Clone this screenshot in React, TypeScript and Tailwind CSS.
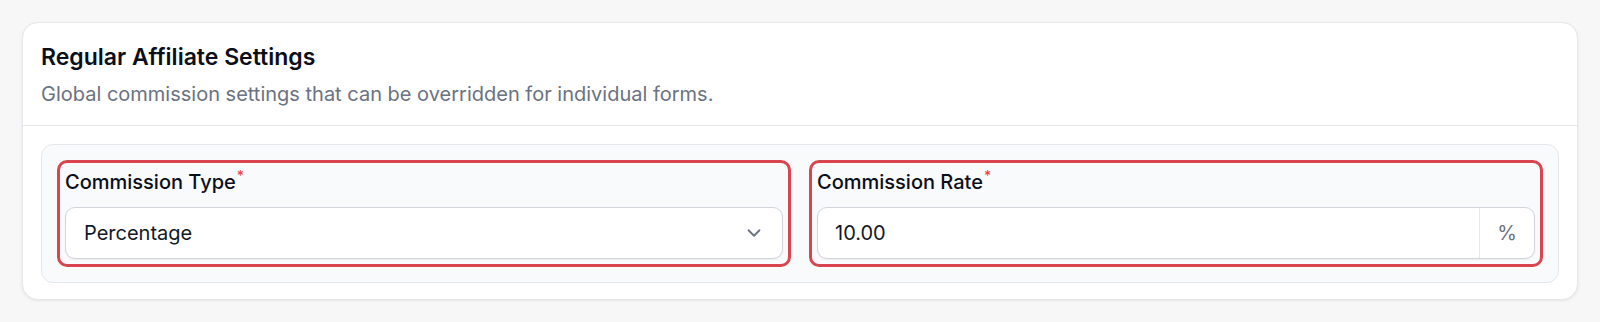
import React, { useState } from 'react';
import { ChevronDown } from 'lucide-react';

const Required = () => (
  <span className="relative -top-[8px] ml-[1px] text-[14px] leading-none text-[#ef4444]">*</span>
);

const App = () => {
  const [rate, setRate] = useState('10.00');

  return (
    <div className="min-h-[322px] bg-[#f7f7f7] p-[22px] font-['Inter','Liberation_Sans',sans-serif] text-[#111827]">
      <div className="rounded-[16px] border border-[#e5e7eb] bg-white shadow-[0_1px_3px_rgba(0,0,0,0.08)]">
        {/* Header */}
        <div className="border-b border-[#e5e7eb] px-[18px] pb-[17px] pt-[20px]">
          <h2 className="text-[23px] font-semibold leading-7 text-[#0b0f19]">Regular Affiliate Settings</h2>
          <p className="mt-[9px] text-[20px] leading-7 text-[#6b7280]">
            Global commission settings that can be overridden for individual forms.
          </p>
        </div>

        {/* Body */}
        <div className="px-[18px] pb-[16px] pt-[18px]">
          <div className="grid grid-cols-2 gap-[18px] rounded-[12px] border border-[#e5e7eb] bg-[#f9fafb] p-[15px]">
            <div className="rounded-[10px] border-[3px] border-[#da4450] p-[5px]">
              <label className="block text-[20px] font-medium leading-7 text-[#0b0f19]">
                Commission Type
                <Required />
              </label>
              <button
                type="button"
                className="mt-[11px] flex h-[52px] w-full items-center justify-between rounded-[10px] border border-[#d1d5db] bg-white pl-[18px] pr-[17px] text-[20px] text-[#111827] shadow-[0_1px_2px_rgba(0,0,0,0.06)]"
              >
                <span>Percentage</span>
                <ChevronDown size={22} strokeWidth={2} className="text-[#6b7280]" />
              </button>
            </div>

            <div className="rounded-[10px] border-[3px] border-[#da4450] p-[5px]">
              <label className="block text-[20px] font-medium leading-7 text-[#0b0f19]">
                Commission Rate
                <Required />
              </label>
              <div className="mt-[11px] flex h-[52px] w-full overflow-hidden rounded-[10px] border border-[#d1d5db] bg-white shadow-[0_1px_2px_rgba(0,0,0,0.06)]">
                <input
                  value={rate}
                  onChange={(e) => setRate(e.target.value)}
                  className="min-w-0 flex-1 bg-transparent pl-[17px] text-[20px] text-[#111827] outline-none"
                />
                <span className="flex w-[55px] items-center justify-center border-l border-[#e5e7eb] text-[20px] text-[#6b7280]">
                  %
                </span>
              </div>
            </div>
          </div>
        </div>
      </div>
    </div>
  );
};

export default App;
